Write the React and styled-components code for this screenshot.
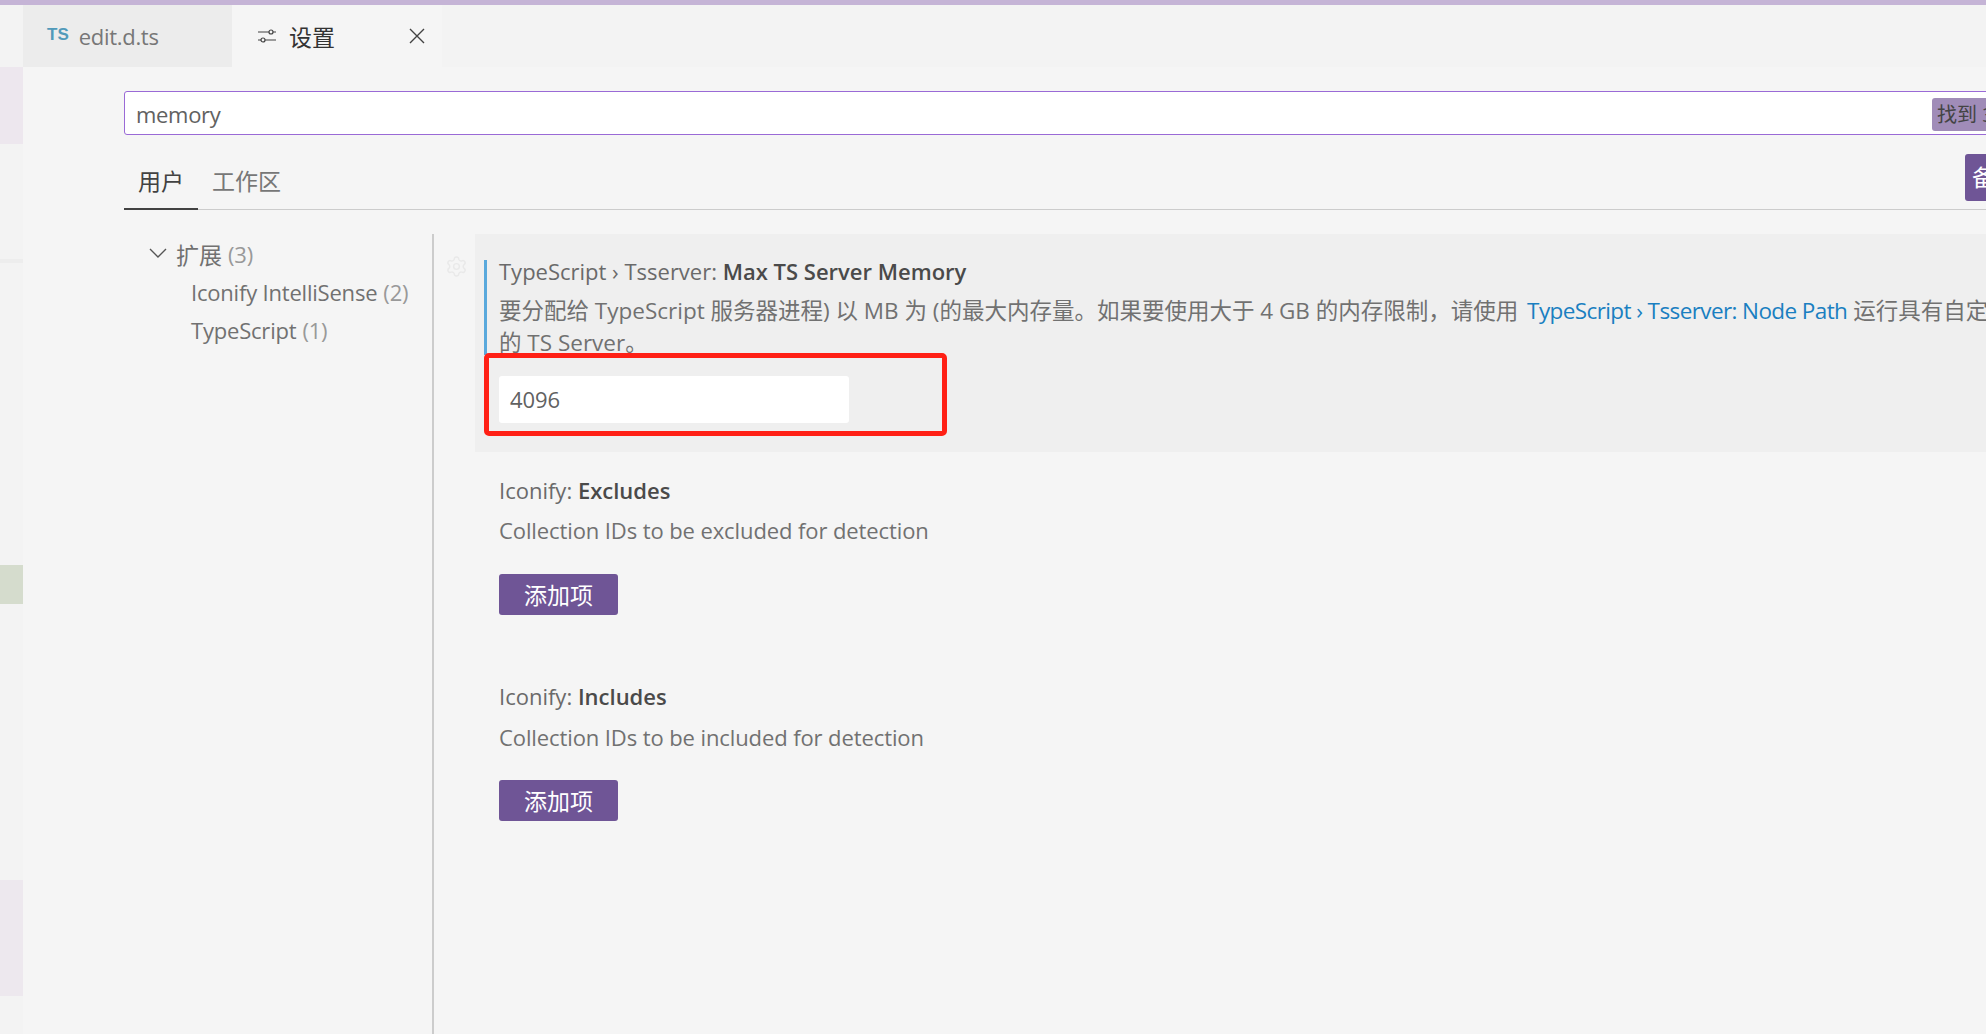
import React from 'react'
import styled, { createGlobalStyle } from 'styled-components'
import { Settings } from 'lucide-react'

const fontStack = '"Open Sans", "Noto Sans CJK SC", sans-serif'

const GlobalStyle = createGlobalStyle`
  html, body {
    margin: 0;
    padding: 0;
    height: 100%;
    overflow: hidden;
    background: #f5f5f5;
  }
  * { box-sizing: border-box; }
`

const Page = styled.div`
  width: 1986px;
  height: 1034px;
  overflow: hidden;
  display: flex;
  flex-direction: column;
  font-family: ${fontStack};
  font-size: 22px;
  letter-spacing: -0.1px;
  color: #717171;
  background: #f5f5f5;
`

const TopBar = styled.div`
  height: 5px;
  flex: none;
  background: #c5b4d6;
`

const Body = styled.div`
  flex: 1;
  display: flex;
  min-height: 0;
`

const ActivityStrip = styled.div`
  width: 23px;
  flex: none;
  background: #f3f3f3;
  display: flex;
  flex-direction: column;
`

const StripMark = styled.div`
  height: ${(p) => p.$h}px;
  margin-top: ${(p) => p.$top}px;
  background: ${(p) => p.$color};
`

const Main = styled.div`
  flex: 1;
  min-width: 0;
  display: flex;
  flex-direction: column;
`

const TabStrip = styled.div`
  height: 62px;
  flex: none;
  display: flex;
  background: #f3f3f3;
`

const Tab = styled.div`
  width: ${(p) => p.$w}px;
  display: flex;
  align-items: center;
  background: ${(p) => (p.$active ? '#f5f5f5' : '#ececec')};
  color: ${(p) => (p.$active ? '#333' : '#777')};
  padding-left: ${(p) => p.$pad}px;
  font-size: ${(p) => (p.$active ? 23 : 22)}px;
  letter-spacing: ${(p) => (p.$active ? 0 : -0.3)}px;
`

const TsBadge = styled.span`
  font-family: "Liberation Sans", sans-serif;
  font-weight: 700;
  font-size: 17px;
  letter-spacing: 0;
  color: #519aba;
  margin-right: 10px;
  margin-top: -2px;
`

const TabIcon = styled.svg`
  width: 20px;
  height: 20px;
  margin-right: 12px;
  flex: none;
`

const CloseIcon = styled.svg`
  width: 16px;
  height: 16px;
  margin-left: auto;
  margin-right: 17px;
  flex: none;
`

const Content = styled.div`
  flex: 1;
  min-height: 0;
  display: flex;
  flex-direction: column;
  padding: 24px 0 0 101px;
`

const SearchBox = styled.div`
  height: 44px;
  width: 1900px;
  flex: none;
  background: #fff;
  border: 1px solid #9a6ad6;
  border-radius: 3px;
  display: flex;
  align-items: center;
  padding: 2px 0 0 11px;
  color: #616161;
  letter-spacing: -0.3px;
  position: relative;
`

const MatchCount = styled.span`
  position: absolute;
  left: 1807px;
  top: 6px;
  height: 33px;
  padding: 0 4px 0 5px;
  width: 100px;
  white-space: nowrap;
  background: #a08cb8;
  border-radius: 3px;
  color: #444;
  font-size: 20px;
  letter-spacing: 0;
  line-height: 34px;
`

const TabsRow = styled.div`
  height: 49px;
  flex: none;
  margin-top: 26px;
  border-bottom: 1px solid #ccc;
  display: flex;
  align-items: flex-start;
  position: relative;
`

const ScopeTab = styled.div`
  height: 49px;
  padding: 0 14px;
  line-height: 40px;
  font-size: 23px;
  letter-spacing: 0;
  color: ${(p) => (p.$active ? '#424242' : '#777')};
  border-bottom: ${(p) => (p.$active ? '2px solid #424242' : 'none')};
`

const BackupButton = styled.div`
  position: absolute;
  left: 1841px;
  top: -7px;
  width: 120px;
  height: 47px;
  padding-left: 7px;
  border-radius: 3px;
  background: #6f5596;
  color: #fff;
  font-size: 23px;
  letter-spacing: 0;
  line-height: 47px;
  white-space: nowrap;
`

const Split = styled.div`
  flex: 1;
  min-height: 0;
  display: flex;
  margin-top: 24px;
`

const Tree = styled.div`
  width: 310px;
  flex: none;
  border-right: 2px solid #ccc;
  padding: 0 0 0 25px;
`

const TreeRow = styled.div`
  height: ${(p) => p.$h || 38}px;
  display: flex;
  align-items: center;
  white-space: nowrap;
  padding-left: ${(p) => p.$indent}px;
  letter-spacing: -0.2px;
  color: #717171;
`

const GroupLabel = styled.span`
  font-size: 23px;
  letter-spacing: 0;
`

const Chevron = styled.svg`
  width: 18px;
  height: 11px;
  flex: none;
  margin-right: 9px;
`

const Count = styled.span`
  color: #999;
  margin-left: 6px;
`

const SettingsList = styled.div`
  flex: 1;
  min-width: 0;
  padding-left: 41px;
`

const SettingItem = styled.div`
  position: relative;
  padding: ${(p) => p.$padTop}px 0 0 24px;
  height: ${(p) => p.$h}px;
  background: ${(p) => (p.$focused ? '#efefef' : 'transparent')};
`

const FocusLine = styled.div`
  position: absolute;
  left: 9px;
  top: 26px;
  width: 3px;
  height: 95px;
  background: #5aa9dc;
`

const Gear = styled(Settings)`
  position: absolute;
  left: -30px;
  top: 21px;
  width: 23px;
  height: 23px;
  color: #e9e9e9;
`

const Title = styled.div`
  line-height: 30px;
  white-space: nowrap;
  letter-spacing: 0;
  color: #6a6a6a;
`

const TitleStrong = styled.span`
  font-weight: 600;
  color: #4a4a4a;
`

const Description = styled.div`
  line-height: 32px;
  margin-top: ${(p) => p.$top}px;
  white-space: nowrap;
  font-size: ${(p) => (p.$cjk ? 22.5 : 22)}px;
  letter-spacing: ${(p) => (p.$cjk ? 0 : -0.1)}px;
`

const Link = styled.span`
  color: #1a7fc1;
  margin-left: 3px;
  letter-spacing: -0.6px;
`

const NumberInput = styled.div`
  width: 350px;
  height: 47px;
  margin-top: 17px;
  background: #fff;
  border-radius: 3px;
  padding-left: 11px;
  line-height: 47px;
  color: #616161;
`

const AddButton = styled.div`
  width: 119px;
  height: 41px;
  margin-top: ${(p) => p.$top}px;
  background: #6f5596;
  border-radius: 3px;
  color: #fff;
  font-size: 23px;
  letter-spacing: 0;
  text-align: center;
  line-height: 42px;
`

const RedFrame = styled.div`
  position: absolute;
  left: 9px;
  top: 119px;
  width: 463px;
  height: 83px;
  border: 5px solid #ff2015;
  border-radius: 5px;
`

const App = () => (
  <Page>
    <GlobalStyle />
    <TopBar />
    <Body>
      <ActivityStrip>
        <StripMark $top={62} $h={77} $color="#ede7ee" />
        <StripMark $top={115} $h={4} $color="#ededed" />
        <StripMark $top={302} $h={39} $color="#d5dccd" />
        <StripMark $top={276} $h={116} $color="#ede8ee" />
      </ActivityStrip>
      <Main>
        <TabStrip>
          <Tab $w={209} $pad={24}>
            <TsBadge>TS</TsBadge>
            edit.d.ts
          </Tab>
          <Tab $w={210} $pad={25} $active>
            <TabIcon viewBox="0 0 20 20" fill="none" stroke="#424242" strokeWidth="1.2">
              <path d="M1 6h11M16 6h3M1 14h3M8 14h11" />
              <circle cx="14" cy="6" r="2" />
              <circle cx="6" cy="14" r="2" />
            </TabIcon>
            设置
            <CloseIcon viewBox="0 0 16 16" fill="none" stroke="#424242" strokeWidth="1.4">
              <path d="M1 1l14 14M15 1L1 15" />
            </CloseIcon>
          </Tab>
        </TabStrip>
        <Content>
          <SearchBox>
            memory
            <MatchCount>找到 3 个设置</MatchCount>
          </SearchBox>
          <TabsRow>
            <ScopeTab $active>用户</ScopeTab>
            <ScopeTab>工作区</ScopeTab>
            <BackupButton>备份和同步设置</BackupButton>
          </TabsRow>
          <Split>
            <Tree>
              <TreeRow $h={39}>
                <Chevron viewBox="0 0 18 11" fill="none" stroke="#555" strokeWidth="1.4">
                  <path d="M1 1l8 8 8-8" />
                </Chevron>
                <GroupLabel>扩展</GroupLabel>
                <Count>(3)</Count>
              </TreeRow>
              <TreeRow $indent={42}>
                Iconify IntelliSense<Count>(2)</Count>
              </TreeRow>
              <TreeRow $indent={42}>
                TypeScript<Count>(1)</Count>
              </TreeRow>
            </Tree>
            <SettingsList>
              <SettingItem $focused $h={218} $padTop={22}>
                <FocusLine />
                <Gear strokeWidth={1.5} />
                <Title>
                  TypeScript › Tsserver: <TitleStrong>Max TS Server Memory</TitleStrong>
                </Title>
                <Description $top={9} $cjk>
                  要分配给 TypeScript 服务器进程) 以 MB 为 (的最大内存量。如果要使用大于 4 GB 的内存限制，请使用{' '}
                  <Link>TypeScript › Tsserver: Node Path</Link> 运行具有自定义 Node 安装
                </Description>
                <Description $top={0} $cjk>的 TS Server。</Description>
                <NumberInput>4096</NumberInput>
                <RedFrame />
              </SettingItem>
              <SettingItem $h={206} $padTop={23}>
                <Title>
                  Iconify: <TitleStrong>Excludes</TitleStrong>
                </Title>
                <Description $top={9}>Collection IDs to be excluded for detection</Description>
                <AddButton $top={28}>添加项</AddButton>
              </SettingItem>
              <SettingItem $h={206} $padTop={23}>
                <Title>
                  Iconify: <TitleStrong>Includes</TitleStrong>
                </Title>
                <Description $top={10}>Collection IDs to be included for detection</Description>
                <AddButton $top={27}>添加项</AddButton>
              </SettingItem>
            </SettingsList>
          </Split>
        </Content>
      </Main>
    </Body>
  </Page>
)

export default App
